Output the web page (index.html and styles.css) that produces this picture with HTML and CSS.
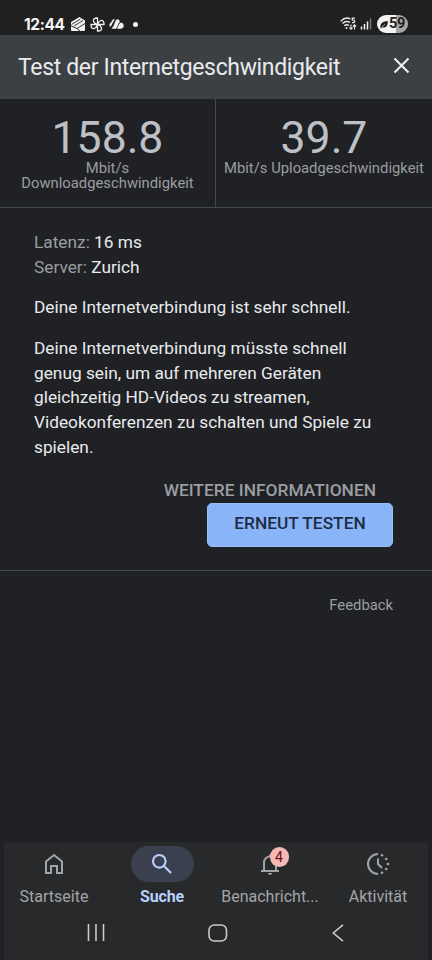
FILE: index.html
```html
<!DOCTYPE html>
<html lang="de">
<head>
<meta charset="utf-8">
<title>Test der Internetgeschwindigkeit</title>
<link rel="stylesheet" href="styles.css">
</head>
<body>
<div class="screen">
  <div class="status">
    <span class="clock">12:44</span>
    <svg class="st-mail" width="16" height="16" viewBox="0 0 16 16"><path d="M1 6 9.500 1 15 4.500V14q0 1-1 1H2q-1 0-1-1Z" fill="#f1f1f1"/><path d="M1.500 8.500 10.500 3M4 10 13 4.500M1 10l6 2.500 8-5M7 12.500l3 2.500" fill="none" stroke="#202020" stroke-width=".9"/></svg>
    <svg class="st-fan" width="15" height="15" viewBox="0 0 15 15" fill="none" stroke="#f1f1f1" stroke-width="1.300"><path d="M7.500 7.500V1C4.500.8 3 2.300 3.500 4.200 4 5.800 5.500 6.800 7.500 7.500ZM7.500 7.500H14C14.200 4.500 12.700 3 10.800 3.500 9.200 4 8.200 5.500 7.500 7.500ZM7.500 7.500V14c3 .2 4.500-1.300 4-3.200C11 9.200 9.500 8.200 7.500 7.500ZM7.500 7.500H1c-.2 3 1.300 4.500 3.200 4C5.800 11 6.800 9.500 7.500 7.500Z"/></svg>
    <svg class="st-cloud" width="15" height="12" viewBox="0 0 15 12" fill="#f1f1f1"><path d="M1 9C0 7.500.3 5.200 2.200 4.300 3 2 4.500 1 6 1.100 4 3.500 3.500 7 1 9Z"/><path d="M2.500 10.300C6 8 5 3.500 8 1.300c2.200.2 2.900 1.600 2.800 2.800C8.500 6 9 8.500 7 10.800H4Z"/><path d="M7.800 10.800C9.500 9 9 6 12 4.500c2 .3 3 2 2.700 3.800-.3 1.600-1.500 2.500-3 2.500Z"/></svg>
    <span class="dot"></span>
    <svg class="st-wifi" width="17" height="14" viewBox="0 0 17 14" fill="none" stroke="#e8e8e8" stroke-width="1.400"><path d="M.7 4.200Q5.500-.7 10.500 2M2.500 6.600Q6 3.200 10 5.500M4.300 8.800Q6.500 7 9 8.500"/><circle cx="6.500" cy="11" r="1" fill="#e8e8e8" stroke="none"/><path d="M15 1.200h-2.700v2h1q1.500 0 1.500 1.300 0 1.200-1.500 1.200H12" stroke-width="1.200"/><path d="M11 7.500v4.700M9.400 10.600 11 12.300l1.600-1.700M14.500 12.500V8M12.900 9.500l1.600-1.700 1.600 1.700" stroke-width="1.100"/></svg>
    <svg class="st-signal" width="12" height="12" viewBox="0 0 12 12"><path d="M1.500 8.500v3M4.500 6v5.500M7.500 3.500v8" stroke="#f1f1f1" stroke-width="1.500"/><path d="M10.500.5v11" stroke="#777" stroke-width="1.500"/></svg>
    <span class="battery"><svg width="8" height="9" viewBox="0 0 8 9"><path d="M.5 8.500C-.2 3 3 1.500 7.800 1 8 5 6.500 8 2.200 7.500Z" fill="#202020"/><path d="M1.500 7.500 5 4.200" stroke="#fff" stroke-width=".6"/></svg><span>59</span></span>
  </div>
  <header class="head">
    <h1>Test der Internetgeschwindigkeit</h1>
    <svg width="17" height="17" viewBox="0 0 17 17"><path d="M1.500 1.500l14 14M15.500 1.500l-14 14" stroke="#eeeff0" stroke-width="2.100"/></svg>
  </header>
  <section class="metrics">
    <div class="metric"><div class="value">158.8</div><div class="unit">Mbit/s<br>Downloadgeschwindigkeit</div></div>
    <div class="metric"><div class="value">39.7</div><div class="unit">Mbit/s Uploadgeschwindigkeit</div></div>
  </section>
  <main class="details">
    <div class="line"><span class="muted">Latenz:</span> 16 ms</div>
    <div class="line"><span class="muted">Server:</span> Zurich</div>
    <p>Deine Internetverbindung ist sehr schnell.</p>
    <p>Deine Internetverbindung müsste schnell<br>genug sein, um auf mehreren Geräten<br>gleichzeitig HD-Videos zu streamen,<br>Videokonferenzen zu schalten und Spiele zu<br>spielen.</p>
    <div class="actions"><a class="more">WEITERE INFORMATIONEN</a><button class="retry">ERNEUT TESTEN</button></div>
  </main>
  <div class="feedback">Feedback</div>
  <footer class="bottom">
    <nav class="tabs">
      <div class="tab"><span class="pill"><svg width="24" height="24" viewBox="0 0 24 24" fill="none" stroke="#a1a4a6" stroke-width="2"><path d="M4 21V9.500L12 3l8 6.500V21h-5v-7H9v7Z"/></svg></span><span class="label">Startseite</span></div>
      <div class="tab active"><span class="pill"><svg width="24" height="24" viewBox="0 0 24 24" fill="none" stroke="#b9d0fc" stroke-width="2.100"><circle cx="9.300" cy="9.300" r="6.300"/><path d="M14 14l7 7"/></svg></span><span class="label">Suche</span></div>
      <div class="tab"><span class="pill"><svg width="24" height="24" viewBox="0 0 24 24" fill="none" stroke="#a1a4a6" stroke-width="2"><path d="M3 19h18M6 19v-8.500a6 6 0 0 1 12 0V19"/><path d="M12 5V2.500"/><path d="M10 21h4a2 2 0 0 1-4 0Z" fill="#a1a4a6" stroke="none"/></svg><span class="badge">4</span></span><span class="label">Benachricht...</span></div>
      <div class="tab"><span class="pill"><svg width="24" height="24" viewBox="0 0 24 24" fill="none" stroke="#a1a4a6" stroke-width="2"><path d="M12 2a10 10 0 0 0 0 20M12 6.500V12l4 4"/><g fill="#a1a4a6" stroke="none"><circle cx="16" cy="3.200" r="1.300"/><circle cx="20.200" cy="7" r="1.300"/><circle cx="22" cy="12" r="1.300"/><circle cx="20.200" cy="17" r="1.300"/><circle cx="16" cy="20.800" r="1.300"/></g></svg></span><span class="label">Aktivität</span></div>
    </nav>
    <div class="system">
      <svg width="18" height="18" viewBox="0 0 18 18"><path d="M1.500 0v17M9 0v17M16.500 0v17" stroke="#c9c9c9" stroke-width="1.600"/></svg>
      <svg width="20" height="18" viewBox="0 0 20 18"><rect x="1" y="1" width="17.500" height="16" rx="5.200" fill="none" stroke="#c9c9c9" stroke-width="1.600"/></svg>
      <svg width="12" height="18" viewBox="0 0 12 18"><path d="M11 .8 1.300 9 11 17.200" fill="none" stroke="#c9c9c9" stroke-width="1.600"/></svg>
    </div>
  </footer>
</div>
</body>
</html>
```
FILE: styles.css
```css
* { box-sizing: border-box; }
body { margin: 0; background: #202124; font-family: Roboto, sans-serif; }
.screen { width: 432px; height: 960px; display: flex; flex-direction: column; overflow: hidden; background: #202124; }
.status { height: 35px; flex: none; display: flex; align-items: center; padding: 13px 24px 0; background: #202020; }
.clock { font: 700 15.500px/20px Inter, sans-serif; color: #f4f4f4; width: 47px; margin-top: 1px; letter-spacing: -0.4px; white-space: nowrap; }
.st-mail { position: relative; left: -1px; }
.st-fan { margin-left: 3px; }
.st-cloud { margin-left: 4px; }
.dot { width: 5px; height: 5px; border-radius: 50%; background: #f1f1f1; margin-left: 9px; }
.st-wifi { margin-left: auto; }
.st-signal { margin-left: 3px; }
.battery { display: flex; align-items: center; justify-content: center; gap: 1px; width: 31px; height: 18px; margin: 0 0 0 5px; border-radius: 9px; background: linear-gradient(90deg, #f3f3f3 60%, #a5a5a5 60%); font: 700 14.500px/18px Roboto, sans-serif; letter-spacing: -0.4px; color: #202020; }
.head { height: 64px; flex: none; display: flex; align-items: center; justify-content: space-between; padding: 0 22px 0 18px; background: #3c4043; }
h1 { margin: 1px 0 0; font-size: 23px; font-weight: 400; letter-spacing: -0.34px; line-height: 30px; color: #e8eaed; white-space: nowrap; }
.head svg { margin-top: -3px; }
.metrics { height: 109px; flex: none; display: grid; grid-template-columns: 1fr 1fr; border-bottom: 1px solid #45484b; text-align: center; }
.metric { padding-top: 17px; }
.metric:first-child { border-right: 1px solid #45484b; }
.value { font-size: 44.500px; line-height: 45px; color: #bdc1c6; }
.unit { font-size: 14.800px; line-height: 15px; color: #9a9da1; white-space: nowrap; }
.details { height: 363px; flex: none; padding: 22px 39px 0 34px; border-bottom: 1px solid #45484b; font-size: 17.300px; line-height: 24.8px; color: #e8eaed; white-space: nowrap; }
.muted { color: #9a9da1; }
p { margin: 15.700px 0 0; }
.actions { display: flex; flex-direction: column; align-items: flex-end; margin-top: 18px; }
.more { margin-right: 17px; font-size: 17.350px; font-weight: 500; line-height: 25px; color: #9a9da1; }
.retry { width: 186px; height: 44px; margin: 0; padding: 0 0 3px; border: 1px solid #99bdf5; border-radius: 5px; background: #8ab4f8; font: 500 17.300px/20px Roboto, sans-serif; color: #202c43; }
.feedback { padding: 24px 39px 0 0; text-align: right; font-size: 14.800px; line-height: 20px; color: #9a9da1; }
.bottom { margin: auto 4px 0; height: 118px; background: #28292b; }
.tabs { display: grid; grid-template-columns: repeat(4, 108px); margin: 0 -4px; padding-top: 4px; }
.tab { display: flex; flex-direction: column; align-items: center; }
.pill { position: relative; display: flex; align-items: center; justify-content: center; width: 63px; height: 36px; border-radius: 18px; }
.active .pill { background: #3b4050; }
.badge { position: absolute; left: 31px; top: 1px; width: 19px; height: 20px; border-radius: 10px; background: #f4b9b5; color: #6b1010; font-size: 14px; line-height: 20px; text-align: center; }
.label { margin-top: 5px; font: 400 16px/20px Roboto, sans-serif; color: #a2a5a8; white-space: nowrap; }
.active .label { font-weight: 700; letter-spacing: -0.2px; color: #b9d0fc; }
.system { display: flex; align-items: center; padding: 17px 84px 0 83px; justify-content: space-between; }
.system svg:nth-child(2) { margin-left: -2px; }
```
